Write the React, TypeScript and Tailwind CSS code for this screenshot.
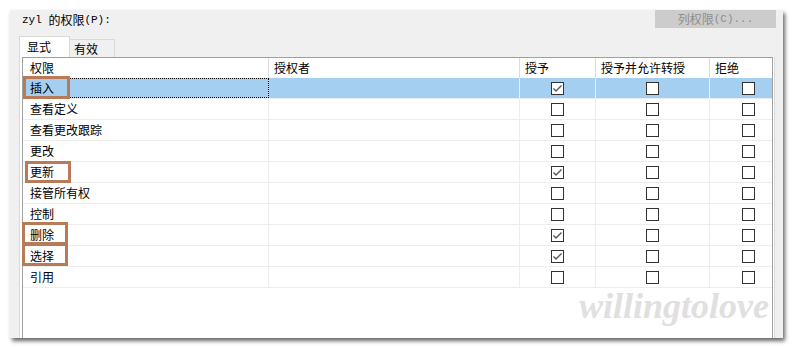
import React from "react";

const F = { fontFamily: '"Noto Sans CJK SC", "Noto Sans", sans-serif' };
const M = { fontFamily: '"Liberation Mono", monospace' };

type Row = { n: string; g?: boolean; sel?: boolean };
const rows: Row[] = [
  { n: "插入", g: true, sel: true },
  { n: "查看定义" },
  { n: "查看更改跟踪" },
  { n: "更改" },
  { n: "更新", g: true },
  { n: "接管所有权" },
  { n: "控制" },
  { n: "删除", g: true },
  { n: "选择", g: true },
  { n: "引用" },
];

function Box({ checked }: { checked?: boolean }) {
  return (
    <svg width="13" height="13" viewBox="0 0 13 13" className="block">
      <rect x="0.5" y="0.5" width="12" height="12" fill="white" stroke="#333" strokeWidth="1" />
      {checked && (
        <path d="M2.5 6.5 L5 9 L10.5 3.5" fill="none" stroke="#555" strokeWidth="1.4" />
      )}
    </svg>
  );
}

const cols = "grid grid-cols-[246px_251px_76px_114px_76px]";

export default function App() {
  return (
    <div className="w-[795px] h-[349px] bg-white overflow-hidden pt-[10px] pl-[10px]" style={F}>
      <div className="relative w-[773px] h-[328px] bg-[#f0f0f0] shadow-[2px_3px_4px_rgba(0,0,0,0.6)] flex flex-col overflow-hidden">
        {/* top row */}
        <div className="h-[18px] flex items-center justify-between">
          <div className="pl-[12px] pt-[2px] text-[12px] text-black flex items-center leading-none">
            <span style={M} className="text-[11px]">zyl&nbsp;</span>
            <span>的权限</span>
            <span style={M} className="text-[11px]">(P):</span>
          </div>
          <div className="mr-[7px] w-[121px] h-[18px] bg-[#cccccc] flex items-center justify-center text-[12px] text-[#8c8c8c] leading-none">
            <span>列权限</span>
            <span style={M} className="text-[11px]">(C)...</span>
          </div>
        </div>
        {/* tabs */}
        <div className="mt-[8px] h-[21px] pl-[9px] flex items-end">
          <div className="w-[51px] h-[21px] bg-white border border-b-0 border-[#d9d9d9] text-[12px] leading-[20px] pl-[7px]">显式</div>
          <div className="w-[45px] h-[18px] bg-[#f0f0f0] border-t border-r border-[#d9d9d9] text-[12px] leading-[18px] pl-[4px]">有效</div>
        </div>
        {/* tab panel */}
        <div className="flex-1 ml-[9px] mr-[8px] bg-white border-l border-r border-[#d9d9d9] pl-[2px] pr-[1px] flex flex-col">
          <div className="flex-1 border-t border-l border-r border-[#a0a0a0] overflow-hidden bg-white text-[12px] text-black">
            <div className={`${cols} h-[20px]`}>
              <div className="border-r border-[#dcdcdc] pl-[7px] leading-[20px]">权限</div>
              <div className="border-r border-[#dcdcdc] pl-[5px] leading-[20px]">授权者</div>
              <div className="border-r border-[#dcdcdc] pl-[5px] leading-[20px]">授予</div>
              <div className="border-r border-[#dcdcdc] pl-[5px] leading-[20px]">授予并允许转授</div>
              <div className="pl-[5px] leading-[20px]">拒绝</div>
            </div>
            {rows.map((r) => (
              <div
                key={r.n}
                className={`${cols} h-[21px] border-b border-[#ededed] ${r.sel ? "bg-[#a5cff1]" : ""}`}
              >
                <div
                  className={
                    r.sel
                      ? "border border-dotted border-black pl-[6px] leading-[18px]"
                      : "border-r border-[#ededed] pl-[7px] leading-[20px]"
                  }
                >
                  {r.n}
                </div>
                <div className="border-r border-[#ededed]" />
                <div className="border-r border-[#ededed] flex items-center justify-center">
                  <Box checked={r.g} />
                </div>
                <div className="border-r border-[#ededed] flex items-center justify-center">
                  <Box />
                </div>
                <div className="flex items-center justify-center">
                  <Box />
                </div>
              </div>
            ))}
          </div>
        </div>

        {/* annotation boxes */}
        <div className="absolute left-[13px] top-[66px] w-[47px] h-[23px] border-[3px] border-[#b97a57]" />
        <div className="absolute left-[15px] top-[151px] w-[46px] h-[22px] border-[3px] border-[#b97a57]" />
        <div className="absolute left-[12px] top-[212px] w-[46px] h-[23px] border-[3px] border-[#b97a57]" />
        <div className="absolute left-[12px] top-[233px] w-[46px] h-[23px] border-[3px] border-[#b97a57]" />

        {/* watermark */}
        <div
          className="absolute left-[569px] top-[278px] text-[36px] leading-none font-bold italic text-[#e0e0e0] whitespace-nowrap"
          style={{ fontFamily: '"Liberation Serif", serif' }}
        >
          willingtolove
        </div>
      </div>
    </div>
  );
}
